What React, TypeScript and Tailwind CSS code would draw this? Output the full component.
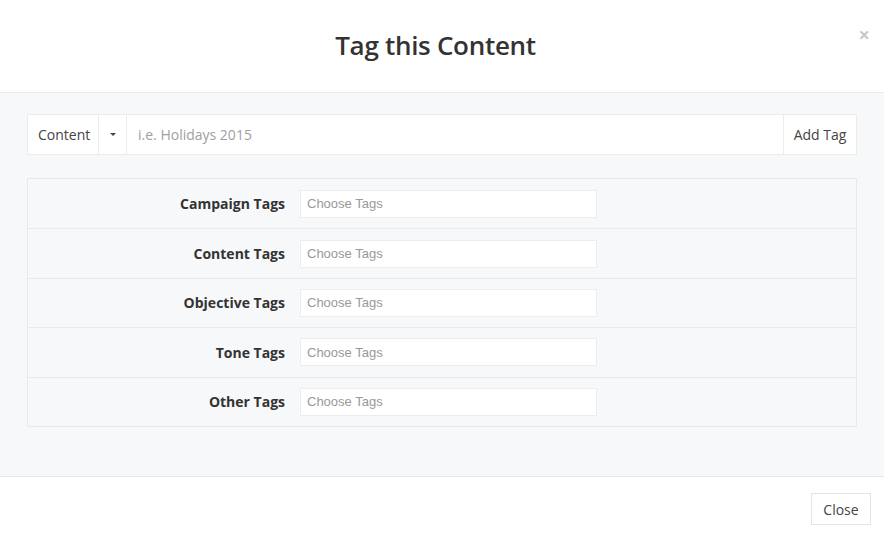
import React from "react";

const rows = ["Campaign Tags", "Content Tags", "Objective Tags", "Tone Tags", "Other Tags"];

export default function App() {
  return (
    <div className="w-[884px] h-[536px] bg-white flex flex-col overflow-hidden" style={{ fontFamily: '"Open Sans", sans-serif' }}>
      <div className="relative h-[93px] shrink-0 flex items-center justify-center border-b border-[#e9eaec]">
        <h1 className="text-[26px] font-semibold text-[#333] tracking-[-0.3px] mt-[-2px] mr-[13px]">Tag this Content</h1>
        <span className="absolute right-[14px] top-[25px] text-[20px] font-bold text-[#c8c8c8] leading-none">×</span>
      </div>
      <div className="h-[384px] shrink-0 bg-[#f7f8f9] border-b border-[#e6e7e9] px-[27px] pt-[21px]">
        <div className="flex h-[41px] border border-[#ececec] bg-white text-[14px]">
          <div className="w-[71px] flex items-center pl-[10px] text-[#444] border-r border-[#ececec]">Content</div>
          <div className="w-[28px] flex items-center justify-center border-r border-[#ececec]">
            <span className="block w-0 h-0 border-l-[3px] border-r-[3px] border-t-[3px] border-l-transparent border-r-transparent border-t-[#444]" />
          </div>
          <div className="flex-1 flex items-center pl-[11px] text-[#a0a0a0]">i.e. Holidays 2015</div>
          <div className="w-[73px] flex items-center justify-center text-[#444] border-l border-[#ececec]">Add Tag</div>
        </div>
        <div className="mt-[23px] border border-[#e8e9eb]">
          {rows.map((r, i) => (
            <div key={r} className={`flex items-center h-[49.4px] ${i > 0 ? "border-t border-[#e8e9eb]" : ""}`}>
              <div className="w-[257px] text-right text-[14px] font-bold text-[#333]">{r}</div>
              <div className="ml-[15px] w-[297px] h-[28px] bg-white border border-[#ededed] flex items-center pl-[6px] text-[13px] text-[#999]" style={{ fontFamily: '"Liberation Sans", Arial, sans-serif' }}>
                Choose Tags
              </div>
            </div>
          ))}
        </div>
      </div>
      <div className="flex-1 flex items-start justify-end pr-[13px] pt-[16px]">
        <div className="w-[60px] h-[32px] border border-[#e4e4e4] bg-white flex items-center justify-center text-[14px] text-[#444]">Close</div>
      </div>
    </div>
  );
}
